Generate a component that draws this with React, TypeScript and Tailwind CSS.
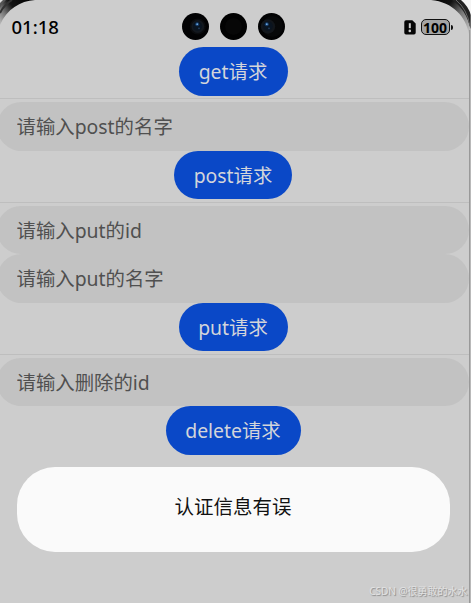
import type { ReactNode } from "react";

const CameraLens = () => (
  <svg className="h-[27px] w-[27px]" viewBox="0 0 27 27">
    <circle cx="13.5" cy="13.5" r="13.5" fill="#020203" />
    <circle cx="15.8" cy="13.5" r="8" fill="#0a0b0d" />
    <circle cx="15.8" cy="13.5" r="6.4" fill="#13181e" />
    <circle cx="15.5" cy="13.2" r="4.6" fill="#0a1420" />
    <circle cx="15.2" cy="11.2" r="2" fill="#163c68" />
    <circle cx="15.2" cy="11.2" r="0.9" fill="#6fa9e0" />
    <circle cx="17" cy="15.3" r="0.9" fill="#24405f" />
  </svg>
);

const RightLens = () => (
  <svg className="h-[27px] w-[27px]" viewBox="0 0 27 27">
    <circle cx="13.5" cy="13.5" r="13.5" fill="#020203" />
    <circle cx="14.5" cy="13.5" r="10.5" fill="#070809" />
    <circle cx="10" cy="13.5" r="7.2" fill="#12161b" />
    <circle cx="10" cy="13.2" r="4.8" fill="#0a1420" />
    <circle cx="8.8" cy="11.2" r="2" fill="#163c68" />
    <circle cx="8.8" cy="11.2" r="0.9" fill="#6fa9e0" />
    <circle cx="11" cy="15.3" r="0.9" fill="#24405f" />
  </svg>
);

const SimAlertIcon = () => (
  <svg className="h-[15px] w-3" viewBox="0 0 12 15">
    <path d="M2 0.2h6.3l3.4 3.4v9.1a1.7 1.7 0 0 1-1.7 1.7H2A1.7 1.7 0 0 1 .3 12.7V1.9A1.7 1.7 0 0 1 2 .2z" fill="#050505" />
    <path d="M5.8 3.2v5" stroke="#cdcdcd" strokeWidth="2" />
    <circle cx="5.8" cy="10.9" r="1.3" fill="#cdcdcd" />
  </svg>
);

const StatusBar = () => (
  <div className="flex h-[47px] items-start pt-[13px]">
    <div className="w-[182px] pl-[11.5px] text-[18.5px] leading-[28px] font-medium text-black">
      01:18
    </div>
    <div className="flex gap-[11px]">
      <CameraLens />
      <svg className="h-[27px] w-[27px]" viewBox="0 0 27 27">
        <circle cx="13.5" cy="13.5" r="13.5" fill="#020202" />
        <circle cx="13.5" cy="13.5" r="8.5" fill="#070707" />
      </svg>
      <RightLens />
    </div>
    <div className="ml-[118.5px] flex items-center pt-[6px]">
      <SimAlertIcon />
      <div className="ml-[5px] flex h-4 w-[29px] items-center justify-center rounded-[5px] border-[1.5px] border-[#111] bg-[#a4a4a4] pt-px text-[14px] leading-none font-bold text-black">
        100
      </div>
      <div className="ml-px h-[5px] w-[2px] rounded-r-full bg-[#111]" />
    </div>
  </div>
);

// rounded bezel of the phone, drawn over the screen corners
const Bezel = () => (
  <svg className="pointer-events-none absolute inset-0 h-[603px] w-[471px]" viewBox="0 0 471 603">
    <defs>
      <linearGradient id="left" x1="0" y1="25" x2="34" y2="0" gradientUnits="userSpaceOnUse">
        <stop offset="0" stopColor="#bdbdbd" />
        <stop offset="0.25" stopColor="#777" />
        <stop offset="0.5" stopColor="#151515" />
        <stop offset="1" stopColor="#000" />
      </linearGradient>
      <linearGradient id="right" x1="468" y1="32" x2="430" y2="0" gradientUnits="userSpaceOnUse">
        <stop offset="0" stopColor="#bdbdbd" />
        <stop offset="0.35" stopColor="#777" />
        <stop offset="0.65" stopColor="#111" />
        <stop offset="1" stopColor="#000" />
      </linearGradient>
    </defs>
    <path d="M0 0H35C20 1 7 9 0 25Z" fill="url(#left)" />
    <path d="M0 13Q4 5 12 0" fill="none" stroke="#333" strokeWidth="2" />
    <path d="M0 8V0H6Q2 3 0 8Z" fill="#555" />
    <path d="M0 3V0H3Z" fill="#ddd" />
    <path d="M431 0H471V34H469C466 17 453 2 431 0Z" fill="url(#right)" />
    <path d="M452 0Q466 9 470.5 29V0Z" fill="#222" />
    <path d="M456 0Q467 9 470 26" fill="none" stroke="#666" strokeWidth="1" />
    <path d="M461 0H471V15Q468 6 461 0Z" fill="#f4f4f4" />
    <path d="M469.5 30V603" stroke="#999" strokeWidth="1" />
    <path d="M470.5 30V603" stroke="#b9b9b9" strokeWidth="1" />
  </svg>
);

const Divider = () => <div className="-mr-[3px] mt-[2.4px] mb-[2.9px] h-[1.3px] bg-[#bebebe]" />;

const Field = ({ placeholder }: { placeholder: string }) => (
  <input
    type="text"
    placeholder={placeholder}
    className="-ml-[3px] block h-[48.4px] w-[472px] rounded-full bg-[#c2c2c2] pl-[19.5px] text-[19.4px] text-[#505050] outline-none placeholder:text-[#505050]"
  />
);

const RequestButton = ({ width, children }: { width: string; children: ReactNode }) => (
  <button className={`mx-auto block h-[48.7px] rounded-full bg-[#0a48c7] text-center text-[19.4px] leading-[49px] whitespace-nowrap text-[#d3d5da] ${width}`}>
    {children}
  </button>
);

export default function App() {
  return (
    <div className="relative h-[603px] w-[471px] overflow-hidden bg-[#cdcdcd] font-['Noto_Sans','Noto_Sans_CJK_SC',sans-serif]">
      <StatusBar />
      <div className="w-[466px]">
        <RequestButton width="w-[109px]">get请求</RequestButton>
        <Divider />
        <Field placeholder="请输入post的名字" />
        <RequestButton width="w-[118px]">post请求</RequestButton>
        <Divider />
        <Field placeholder="请输入put的id" />
        <Field placeholder="请输入put的名字" />
        <RequestButton width="w-[109px]">put请求</RequestButton>
        <Divider />
        <Field placeholder="请输入删除的id" />
        <RequestButton width="w-[135px]">delete请求</RequestButton>
      </div>

      {/* dialog */}
      <div className="absolute top-[467px] left-[16.5px] h-[85px] w-[433px] rounded-[38px] bg-[#fafafa] pt-[25px] text-center text-[19.5px] leading-[29px] text-[#111]">
        认证信息有误
      </div>

      <div className="absolute top-[583px] right-[3.5px] text-[10px] leading-4 whitespace-nowrap text-[#e2e2e2] [text-shadow:1px_1px_1px_#888]">
        CSDN @很勇敢的水水
      </div>
      <Bezel />
    </div>
  );
}
